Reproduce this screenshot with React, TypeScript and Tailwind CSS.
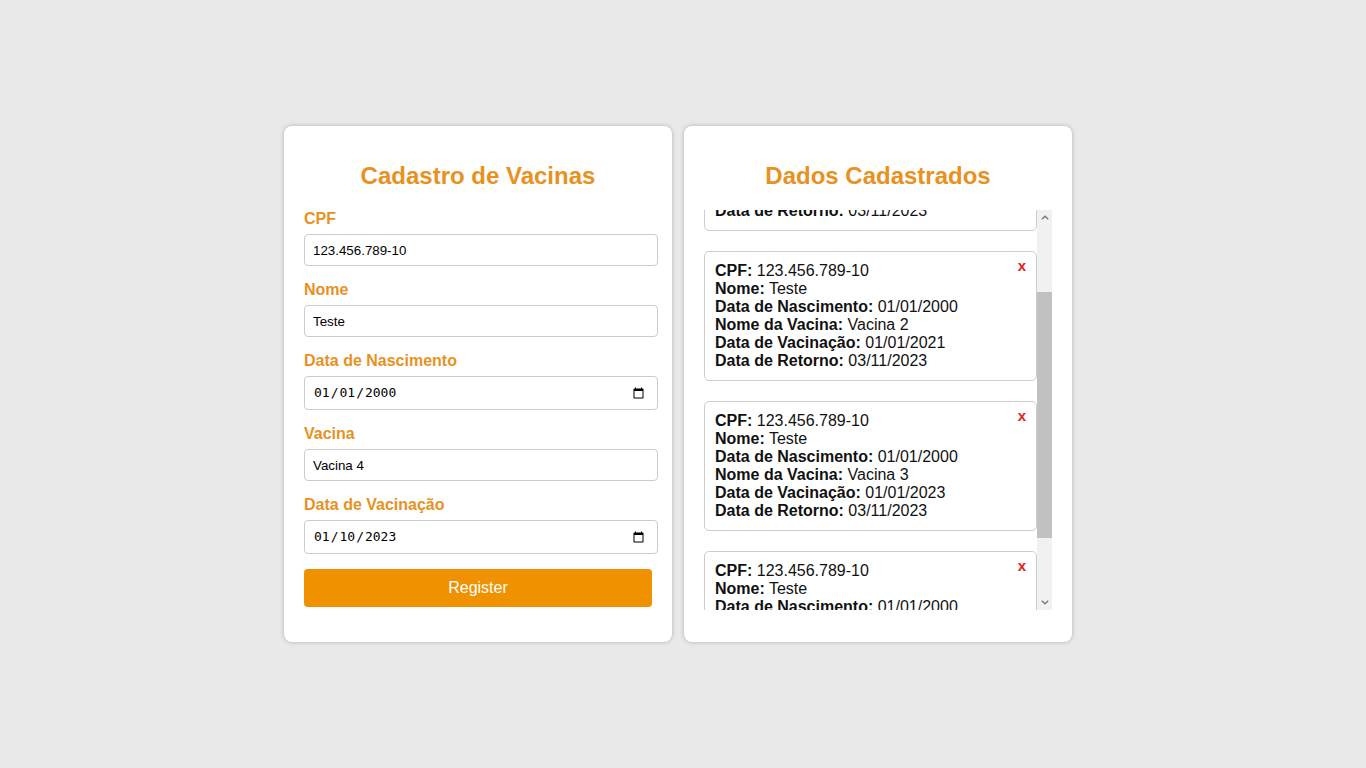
import { useEffect, useRef } from "react";

const registros = [
  { cpf: "123.456.789-10", nome: "Teste", nascimento: "01/01/2000", vacina: "Vacina 1", vacinacao: "01/01/2020", retorno: "03/11/2023" },
  { cpf: "123.456.789-10", nome: "Teste", nascimento: "01/01/2000", vacina: "Vacina 2", vacinacao: "01/01/2021", retorno: "03/11/2023" },
  { cpf: "123.456.789-10", nome: "Teste", nascimento: "01/01/2000", vacina: "Vacina 3", vacinacao: "01/01/2023", retorno: "03/11/2023" },
  { cpf: "123.456.789-10", nome: "Teste", nascimento: "01/01/2000", vacina: "Vacina 4", vacinacao: "01/10/2023", retorno: "03/11/2023" },
];

function Field({ label, children, first }: { label: string; children: React.ReactNode; first?: boolean }) {
  return (
    <div className={first ? "" : "mt-[15px]"}>
      <label className="block text-[16px] leading-[18px] font-bold text-[#e8911e] mb-[6px]">{label}</label>
      {children}
    </div>
  );
}

export default function App() {
  const listRef = useRef<HTMLDivElement>(null);

  useEffect(() => {
    if (listRef.current) listRef.current.scrollTop = 109;
  }, []);

  const textInput =
    "block w-[354px] h-[32px] px-[8px] border border-[#cccccc] rounded-[4px] text-[13.33px] text-black bg-white outline-none";
  const dateInput =
    "block w-[354px] h-[34px] pl-[8px] pr-[10px] border border-[#cccccc] rounded-[4px] text-[13px] text-black bg-white outline-none";

  return (
    <div
      className="min-h-screen bg-[#e9e9e9] flex items-center justify-center pr-[10px]"
      style={{ fontFamily: '"Liberation Sans", Arial, sans-serif' }}
    >
      <div className="flex gap-[12px] items-stretch">
        <div className="w-[388px] bg-white rounded-[8px] shadow-[0_0_4px_rgba(0,0,0,0.25)] px-[20px] pt-[21px] pb-[35px]">
          <h2 className="text-center text-[24px] leading-[28px] font-bold text-[#e8911e] mt-[15px] mb-[20px]">
            Cadastro de Vacinas
          </h2>
          <Field label="CPF" first>
            <input className={textInput} defaultValue="123.456.789-10" />
          </Field>
          <Field label="Nome">
            <input className={textInput} defaultValue="Teste" />
          </Field>
          <Field label="Data de Nascimento">
            <input type="date" className={dateInput} style={{ fontFamily: '"DejaVu Sans Mono", monospace' }} defaultValue="2000-01-01" />
          </Field>
          <Field label="Vacina">
            <input className={textInput} defaultValue="Vacina 4" />
          </Field>
          <Field label="Data de Vacinação">
            <input type="date" className={dateInput} style={{ fontFamily: '"DejaVu Sans Mono", monospace' }} defaultValue="2023-01-10" />
          </Field>
          <button className="mt-[15px] w-[348px] h-[38px] rounded-[4px] bg-[#f09200] text-white text-[16px]">
            Register
          </button>
        </div>

        <div className="w-[388px] bg-white rounded-[8px] shadow-[0_0_4px_rgba(0,0,0,0.25)] px-[20px] pt-[21px] pb-[20px]">
          <h2 className="text-center text-[24px] leading-[28px] font-bold text-[#e8911e] mt-[15px] mb-[20px]">
            Dados Cadastrados
          </h2>
          <div className="flex w-[348px] h-[400px]">
            <div ref={listRef} className="w-[333px] h-[400px] overflow-y-scroll">
              {registros.map((r, i) => (
                <div
                  key={i}
                  className="relative mb-[20px] border border-[#cccccc] rounded-[5px] p-[10px] text-[16px] leading-[18px] text-[#111111]"
                >
                  <button className="absolute top-[5px] right-[10px] text-[15px] font-bold text-[#dd2222]">x</button>
                  <p><b>CPF:</b> {r.cpf}</p>
                  <p><b>Nome:</b> {r.nome}</p>
                  <p><b>Data de Nascimento:</b> {r.nascimento}</p>
                  <p><b>Nome da Vacina:</b> {r.vacina}</p>
                  <p><b>Data de Vacinação:</b> {r.vacinacao}</p>
                  <p><b>Data de Retorno:</b> {r.retorno}</p>
                </div>
              ))}
            </div>
            <div className="w-[15px] h-[400px] bg-[#f1f1f1] flex flex-col">
              <div className="h-[15px] flex items-center justify-center">
                <svg width="8" height="5" viewBox="0 0 8 5">
                  <path d="M0.8 4.3 L4 1.2 L7.2 4.3" fill="none" stroke="#7a7a7a" strokeWidth="1.4" />
                </svg>
              </div>
              <div className="flex-1">
                <div className="mt-[67px] h-[246px] bg-[#c1c1c1]" />
              </div>
              <div className="h-[15px] flex items-center justify-center">
                <svg width="8" height="5" viewBox="0 0 8 5">
                  <path d="M0.8 0.7 L4 3.8 L7.2 0.7" fill="none" stroke="#7a7a7a" strokeWidth="1.4" />
                </svg>
              </div>
            </div>
          </div>
        </div>
      </div>
    </div>
  );
}
